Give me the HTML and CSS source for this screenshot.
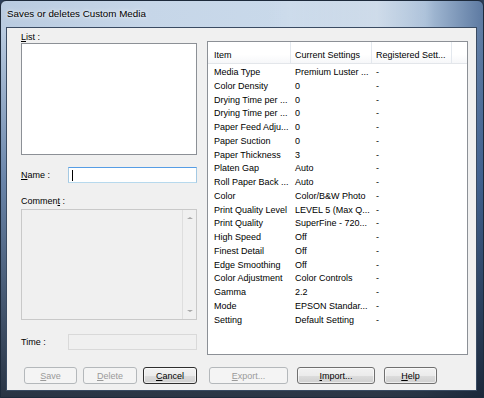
FILE: index.html
```html
<!DOCTYPE html>
<html lang="en">
<head>
<meta charset="UTF-8">
<title>Saves or deletes Custom Media</title>
<link rel="stylesheet" href="styles.css">
</head>
<body>
    <div class="window">
        <!-- title bar -->
        <div class="titlebar">
            <span class="title">Saves or deletes Custom Media</span>
        </div>

        <div class="client">
            <div class="main">
                <!-- left side: list, name, comment, time -->
                <div class="left">
                    <div class="label"><u>L</u>ist :</div>
                    <div class="listbox"></div>

                    <div class="field-row name-row">
                        <span class="field-label"><u>N</u>ame :</span>
                        <div class="textbox focused"><span class="caret"></span></div>
                    </div>

                    <div class="label comment-label">Commen<u>t</u> :</div>
                    <div class="comment-box">
                        <div class="comment-text"></div>
                        <div class="scrollbar">
                            <span class="arrow up"></span>
                            <span class="arrow down"></span>
                        </div>
                    </div>

                    <div class="field-row time-row">
                        <span class="field-label">Time :</span>
                        <div class="textbox disabled"></div>
                    </div>
                </div>

                <!-- right side: settings table -->
                <div class="table-panel">
                    <div class="table-header">
                        <div class="col col-item">Item</div>
                        <div class="col col-current">Current Settings</div>
                        <div class="col col-reg">Registered Sett...</div>
                        <div class="col col-rest"></div>
                    </div>
                    <div id="rows" class="rows">
                        <div class="row"><span class="col-item">Media Type</span><span class="col-current">Premium Luster ...</span><span class="col-reg">-</span></div>
                        <div class="row"><span class="col-item">Color Density</span><span class="col-current">0</span><span class="col-reg">-</span></div>
                        <div class="row"><span class="col-item">Drying Time per ...</span><span class="col-current">0</span><span class="col-reg">-</span></div>
                        <div class="row"><span class="col-item">Drying Time per ...</span><span class="col-current">0</span><span class="col-reg">-</span></div>
                        <div class="row"><span class="col-item">Paper Feed Adju...</span><span class="col-current">0</span><span class="col-reg">-</span></div>
                        <div class="row"><span class="col-item">Paper Suction</span><span class="col-current">0</span><span class="col-reg">-</span></div>
                        <div class="row"><span class="col-item">Paper Thickness</span><span class="col-current">3</span><span class="col-reg">-</span></div>
                        <div class="row"><span class="col-item">Platen Gap</span><span class="col-current">Auto</span><span class="col-reg">-</span></div>
                        <div class="row"><span class="col-item">Roll Paper Back ...</span><span class="col-current">Auto</span><span class="col-reg">-</span></div>
                        <div class="row"><span class="col-item">Color</span><span class="col-current">Color/B&amp;W Photo</span><span class="col-reg">-</span></div>
                        <div class="row"><span class="col-item">Print Quality Level</span><span class="col-current">LEVEL 5 (Max Q...</span><span class="col-reg">-</span></div>
                        <div class="row"><span class="col-item">Print Quality</span><span class="col-current">SuperFine - 720...</span><span class="col-reg">-</span></div>
                        <div class="row"><span class="col-item">High Speed</span><span class="col-current">Off</span><span class="col-reg">-</span></div>
                        <div class="row"><span class="col-item">Finest Detail</span><span class="col-current">Off</span><span class="col-reg">-</span></div>
                        <div class="row"><span class="col-item">Edge Smoothing</span><span class="col-current">Off</span><span class="col-reg">-</span></div>
                        <div class="row"><span class="col-item">Color Adjustment</span><span class="col-current">Color Controls</span><span class="col-reg">-</span></div>
                        <div class="row"><span class="col-item">Gamma</span><span class="col-current">2.2</span><span class="col-reg">-</span></div>
                        <div class="row"><span class="col-item">Mode</span><span class="col-current">EPSON Standar...</span><span class="col-reg">-</span></div>
                        <div class="row"><span class="col-item">Setting</span><span class="col-current">Default Setting</span><span class="col-reg">-</span></div>
                    </div>
                </div>
            </div>

            <!-- bottom buttons -->
            <div class="buttons">
                <button class="btn btn-save" disabled><u>S</u>ave</button>
                <button class="btn btn-delete" disabled><u>D</u>elete</button>
                <button class="btn btn-cancel default"><u>C</u>ancel</button>
                <button class="btn btn-export" disabled><u>E</u>xport...</button>
                <button class="btn btn-import"><u>I</u>mport...</button>
                <button class="btn btn-help"><u>H</u>elp</button>
            </div>
        </div>
    </div>
</body>
</html>
```

FILE: styles.css
```css
* {
    box-sizing: border-box;
}
body {
    margin: 0;
    font-family: "Liberation Sans", Arial, sans-serif;
    font-size: 9px;
    color: #000;
    background: #2c3e58;
}
u {
    text-decoration: underline;
    text-underline-offset: 1px;
}

/* window frame (aero glass) */
.window {
    width: 484px;
    height: 398px;
    display: flex;
    flex-direction: column;
    padding: 0 6px 6px 5px;
    border: 1px solid #1d2a3b;
    border-radius: 6px 6px 0 0;
    background:
        linear-gradient(180deg, rgba(20,35,60,0) 0, rgba(20,35,60,0) 30px, rgba(40,75,125,0.55) 45%, rgba(15,25,40,0.85) 100%),
        linear-gradient(90deg, rgba(255,255,255,0) 0, rgba(255,255,255,0) 55%, rgba(255,255,255,0.35) 78%, rgba(255,255,255,0) 90%),
        linear-gradient(90deg, #b9cbe0 0, #c6d6e8 30%, #c9d9ea 60%, #a9bfd8 88%, #5d7aa2 100%);
}
.titlebar {
    height: 26px;
    display: flex;
    align-items: center;
    padding: 0 0 2px 1px;
}
.title {
    font-size: 9.8px;
    color: #000;
    text-shadow: 0 0 6px rgba(255, 255, 255, 0.9), 0 0 3px rgba(255, 255, 255, 0.8);
}

/* client area */
.client {
    flex: 1;
    display: flex;
    flex-direction: column;
    border: 1px solid #3a4b62;
    background: #f0f0f0;
}
.main {
    display: flex;
}

/* left column */
.left {
    width: 176px;
    margin-left: 14px;
    padding-top: 4px;
    display: flex;
    flex-direction: column;
}
.label {
    height: 10px;
    line-height: 10px;
}
.listbox {
    height: 112px;
    margin-top: 1px;
    border: 1px solid #8c9096;
    background: #fff;
}
.field-row {
    display: flex;
    align-items: center;
    height: 16px;
}
.field-label {
    width: 47px;
}
.textbox {
    flex: 1;
    height: 16px;
    border: 1px solid #abadb3;
    background: #fff;
    display: flex;
    align-items: center;
    padding-left: 3px;
}
.textbox.focused {
    border-color: #569de5 #a4c9e3 #b7d9ed #a4c9e3;
}
.textbox.disabled {
    border-color: #d9d9d9;
    background: #f0f0f0;
}
.caret {
    width: 1px;
    height: 11px;
    background: #000;
}
.name-row {
    margin-top: 12px;
}
.comment-label {
    margin-top: 13px;
}
.comment-box {
    height: 111px;
    margin-top: 3px;
    display: flex;
    border: 1px solid #c9c9c9;
    background: #f0f0f0;
}
.comment-text {
    flex: 1;
}
.scrollbar {
    width: 14px;
    border-left: 1px solid #dedede;
    display: flex;
    flex-direction: column;
    justify-content: space-between;
    align-items: center;
    padding: 7px 0 7px;
}
.arrow {
    width: 0;
    height: 0;
    border-left: 3px solid transparent;
    border-right: 3px solid transparent;
}
.arrow.up {
    border-bottom: 2px solid #a8a8a8;
}
.arrow.down {
    border-top: 2px solid #a8a8a8;
}
.time-row {
    margin-top: 14px;
}

/* settings table */
.table-panel {
    width: 261px;
    height: 314px;
    margin-left: 10px;
    margin-top: 13px;
    border: 1px solid #8c9096;
    background: #fff;
}
.table-header {
    display: flex;
    height: 22px;
    border-bottom: 1px solid #e3e6ea;
    background: linear-gradient(#ffffff 0, #ffffff 60%, #f6f7f9 100%);
}
.table-header .col {
    padding-top: 8px;
    line-height: 11px;
    border-right: 1px solid #e3e8ee;
    white-space: nowrap;
    overflow: hidden;
}
.table-header .col-rest {
    flex: 1;
    border-right: none;
}
.rows {
    padding-top: 2px;
}
.row {
    display: flex;
    height: 13.78px;
    line-height: 13.78px;
}
.row span {
    white-space: nowrap;
    overflow: hidden;
}
.col-item {
    width: 83px;
    padding-left: 6px;
}
.col-current {
    width: 81px;
    padding-left: 4px;
}
.col-reg {
    width: 80px;
    padding-left: 4px;
}

/* buttons */
.buttons {
    display: flex;
    margin-top: 12px;
    margin-left: 17px;
}
.btn {
    height: 17px;
    padding: 0;
    font-family: "Liberation Sans", Arial, sans-serif;
    font-size: 9px;
    color: #000;
    border: 1px solid #707070;
    border-radius: 3px;
    background: linear-gradient(#f2f2f2 0, #ebebeb 50%, #dddddd 50%, #cfcfcf 100%);
    box-shadow: inset 0 0 0 1px rgba(255, 255, 255, 0.6);
}
.btn:disabled {
    color: #9a9a9a;
    border-color: #b4b8bb;
    background: #f4f4f4;
    box-shadow: none;
}
.btn.default {
    border-color: #2f2f2f;
}
.btn-save {
    width: 53px;
}
.btn-delete {
    width: 54px;
    margin-left: 6px;
}
.btn-cancel {
    width: 54px;
    margin-left: 6px;
}
.btn-export {
    width: 79px;
    margin-left: 12px;
}
.btn-import {
    width: 78px;
    margin-left: 9px;
}
.btn-help {
    width: 53px;
    margin-left: 9px;
}
```
